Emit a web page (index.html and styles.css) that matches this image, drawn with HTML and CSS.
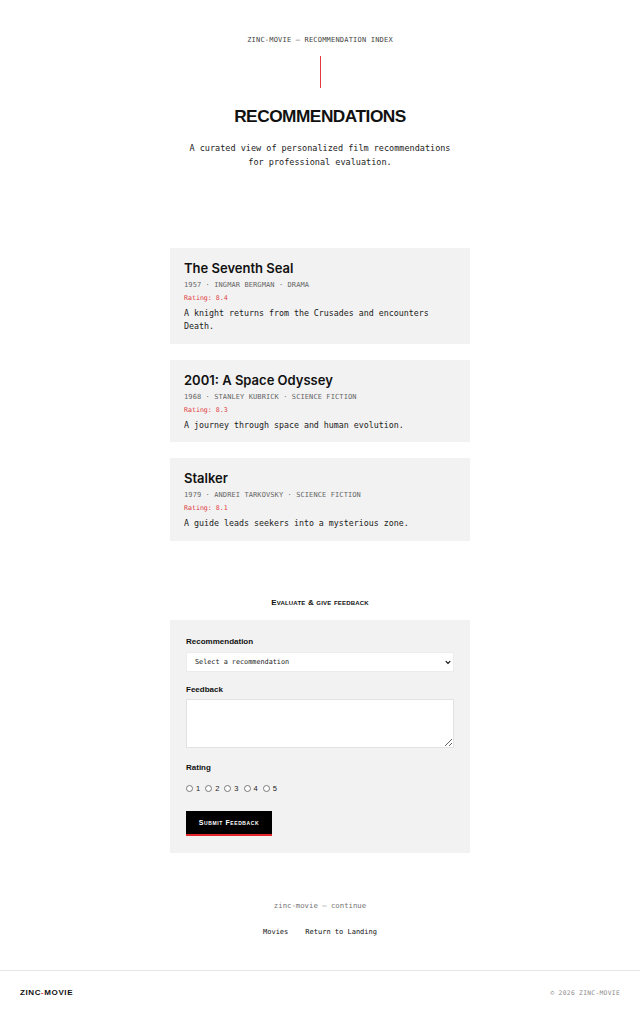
FILE: index.html
```html
<!DOCTYPE html>
<html lang="en">
<head>
<meta charset="utf-8">
<title>Recommendations — zinc-movie</title>
<link rel="stylesheet" href="styles.css">
</head>
<body>
<header class="hero">
  <p class="eyebrow">ZINC-MOVIE — RECOMMENDATION INDEX</p>
  <span class="rule"></span>
  <h1 class="title">RECOMMENDATIONS</h1>
  <p class="lede">A curated view of personalized film recommendations<br>for professional evaluation.</p>
</header>

<main class="main">
  <section class="cards">
    <article class="card">
      <h2 class="card-title">The Seventh Seal</h2>
      <p class="card-meta">1957 · INGMAR BERGMAN · DRAMA</p>
      <p class="card-rating">Rating: 8.4</p>
      <p class="card-desc">A knight returns from the Crusades and encounters Death.</p>
    </article>
    <article class="card">
      <h2 class="card-title">2001: A Space Odyssey</h2>
      <p class="card-meta">1968 · STANLEY KUBRICK · SCIENCE FICTION</p>
      <p class="card-rating">Rating: 8.3</p>
      <p class="card-desc">A journey through space and human evolution.</p>
    </article>
    <article class="card">
      <h2 class="card-title">Stalker</h2>
      <p class="card-meta">1979 · ANDREI TARKOVSKY · SCIENCE FICTION</p>
      <p class="card-rating">Rating: 8.1</p>
      <p class="card-desc">A guide leads seekers into a mysterious zone.</p>
    </article>
  </section>

  <section class="evaluate">
    <h3 class="section-title">Evaluate &amp; give feedback</h3>
    <form class="form">
      <label class="label" for="rec">Recommendation</label>
      <div class="select-wrap">
        <select class="select" id="rec">
          <option>Select a recommendation</option>
          <option>The Seventh Seal</option>
          <option>2001: A Space Odyssey</option>
          <option>Stalker</option>
        </select>
        <svg class="chev" viewBox="0 0 8 6" width="6" height="5" aria-hidden="true"><path d="M1 1.2 L4 4.3 L7 1.2" fill="none" stroke="#111" stroke-width="1.6"/></svg>
      </div>
      <label class="label label-gap" for="fb">Feedback</label>
      <textarea class="textarea" id="fb"></textarea>
      <span class="label label-gap2">Rating</span>
      <div class="radios">
        <label class="radio"><input type="radio" name="r">1</label>
        <label class="radio"><input type="radio" name="r">2</label>
        <label class="radio"><input type="radio" name="r">3</label>
        <label class="radio"><input type="radio" name="r">4</label>
        <label class="radio"><input type="radio" name="r">5</label>
      </div>
      <button type="button" class="btn">Submit Feedback</button>
    </form>
  </section>

  <nav class="continue">
    <p class="continue-label">zinc-movie — continue</p>
    <div class="continue-links">
      <a href="#" class="link">Movies</a>
      <a href="#" class="link">Return to Landing</a>
    </div>
  </nav>
</main>

<footer class="footer">
  <span class="logo">ZINC<span class="logo-dash">-</span>MOVIE</span>
  <span class="copy">© 2026 ZINC-MOVIE</span>
</footer>
</body>
</html>
```

FILE: styles.css
```css
* { box-sizing: border-box; }
html, body { margin: 0; padding: 0; background: #fff; color: #111; }
body {
  font-family: "DejaVu Sans Mono", "Liberation Mono", monospace;
  min-height: 1013px;
  display: flex;
  flex-direction: column;
}
p, h1, h2, h3 { margin: 0; }

.hero {
  display: flex;
  flex-direction: column;
  align-items: center;
  text-align: center;
  padding-top: 36px;
}
.eyebrow {
  font-size: 7px;
  line-height: 8px;
  letter-spacing: 0.2px;
  color: #444;
}
.rule {
  display: block;
  width: 1px;
  height: 32px;
  background: #e0393e;
  margin-top: 12px;
}
.title {
  font-family: "Liberation Sans", "Arial", sans-serif;
  font-weight: 700;
  font-size: 17.3px;
  line-height: 24px;
  letter-spacing: -0.5px;
  margin-top: 16px;
  color: #111;
}
.lede {
  font-size: 8.5px;
  line-height: 14px;
  margin-top: 13px;
  color: #222;
}

.main {
  width: 300px;
  margin: 0 auto;
  flex: 1;
  display: flex;
  flex-direction: column;
}

.cards {
  margin-top: 79px;
  display: flex;
  flex-direction: column;
  gap: 16px;
}
.card {
  background: #f2f2f2;
  padding: 12px 14px 10.5px;
}
.card-title {
  font-family: "Inter", "Liberation Sans", sans-serif;
  font-weight: 600;
  font-size: 13px;
  line-height: 16px;
  letter-spacing: 0px;
  margin-bottom: 3px;
  color: #111;
}
.card-meta {
  font-size: 7px;
  line-height: 12px;
  letter-spacing: 0.1px;
  color: #666;
}
.card-rating {
  font-size: 6.6px;
  line-height: 10px;
  margin-top: 2px;
  color: #e0393e;
}
.card-desc {
  font-size: 8.3px;
  line-height: 13px;
  margin-top: 4px;
  color: #1a1a1a;
}

.evaluate { margin-top: 57px; }
.section-title {
  font-family: "Liberation Sans", "Arial", sans-serif;
  font-weight: 700;
  font-variant: small-caps;
  font-size: 8px;
  line-height: 10px;
  letter-spacing: 0.2px;
  text-align: center;
  color: #111;
}
.form {
  margin-top: 12px;
  background: #f2f2f2;
  padding: 17px 16px 17px;
  display: flex;
  flex-direction: column;
  align-items: flex-start;
}
.label {
  font-family: "Liberation Sans", "Arial", sans-serif;
  font-weight: 700;
  font-size: 8px;
  line-height: 10px;
  margin-bottom: 5px;
  color: #111;
}
.label-gap { margin-top: 13px; margin-bottom: 4px; }
.label-gap2 { margin-top: 15px; margin-bottom: 11px; }
.select-wrap {
  position: relative;
  width: 100%;
}
.select {
  display: block;
  width: 100%;
  height: 20px;
  font-family: "DejaVu Sans Mono", monospace;
  font-size: 6.8px;
  color: #222;
  background: #fff;
  border: 1px solid #ececec;
  border-radius: 0;
  padding: 0 14px 0 8px;
  appearance: none;
  -webkit-appearance: none;
}
.chev {
  position: absolute;
  right: 3px;
  top: 8px;
  pointer-events: none;
}
.textarea {
  display: block;
  width: 100%;
  height: 49px;
  background: #fff;
  border: 1px solid #e2e2e2;
  border-radius: 0;
  font-family: "DejaVu Sans Mono", monospace;
  font-size: 8px;
  margin: 0;
}
.radios {
  display: flex;
  gap: 5px;
  height: 10px;
  align-items: center;
}
.radio {
  display: flex;
  align-items: center;
  gap: 3px;
  font-family: "Liberation Sans", "Arial", sans-serif;
  font-size: 7.5px;
  color: #222;
}
.radio input {
  width: 7px;
  height: 7px;
  margin: 0;
}
.btn {
  margin-top: 17px;
  width: 86px;
  height: 25px;
  background: #000;
  color: #fff;
  border: 0;
  border-bottom: 2px solid #e3262b;
  border-radius: 0;
  font-family: "Liberation Sans", "Arial", sans-serif;
  font-weight: 700;
  font-variant: small-caps;
  font-size: 7px;
  letter-spacing: 0.6px;
  padding: 0;
  cursor: pointer;
}

.continue {
  margin-top: 48px;
  text-align: center;
}
.continue-label {
  font-size: 7.3px;
  line-height: 10px;
  color: #777;
}
.continue-links {
  margin-top: 16px;
  display: flex;
  justify-content: center;
  gap: 17px;
  line-height: 10px;
}
.link {
  font-size: 7px;
  color: #111;
  text-decoration: none;
}

.footer {
  margin-top: 32px;
  border-top: 1px solid #e6e6e6;
  height: 43px;
  padding: 0 20px;
  display: flex;
  align-items: center;
  justify-content: space-between;
}
.logo {
  font-family: "Liberation Sans", "Arial", sans-serif;
  font-weight: 700;
  font-size: 8px;
  letter-spacing: 0.6px;
  color: #111;
}
.logo-dash { color: #e0393e; }
.copy {
  font-size: 6.3px;
  letter-spacing: 0.3px;
  color: #888;
}
```
